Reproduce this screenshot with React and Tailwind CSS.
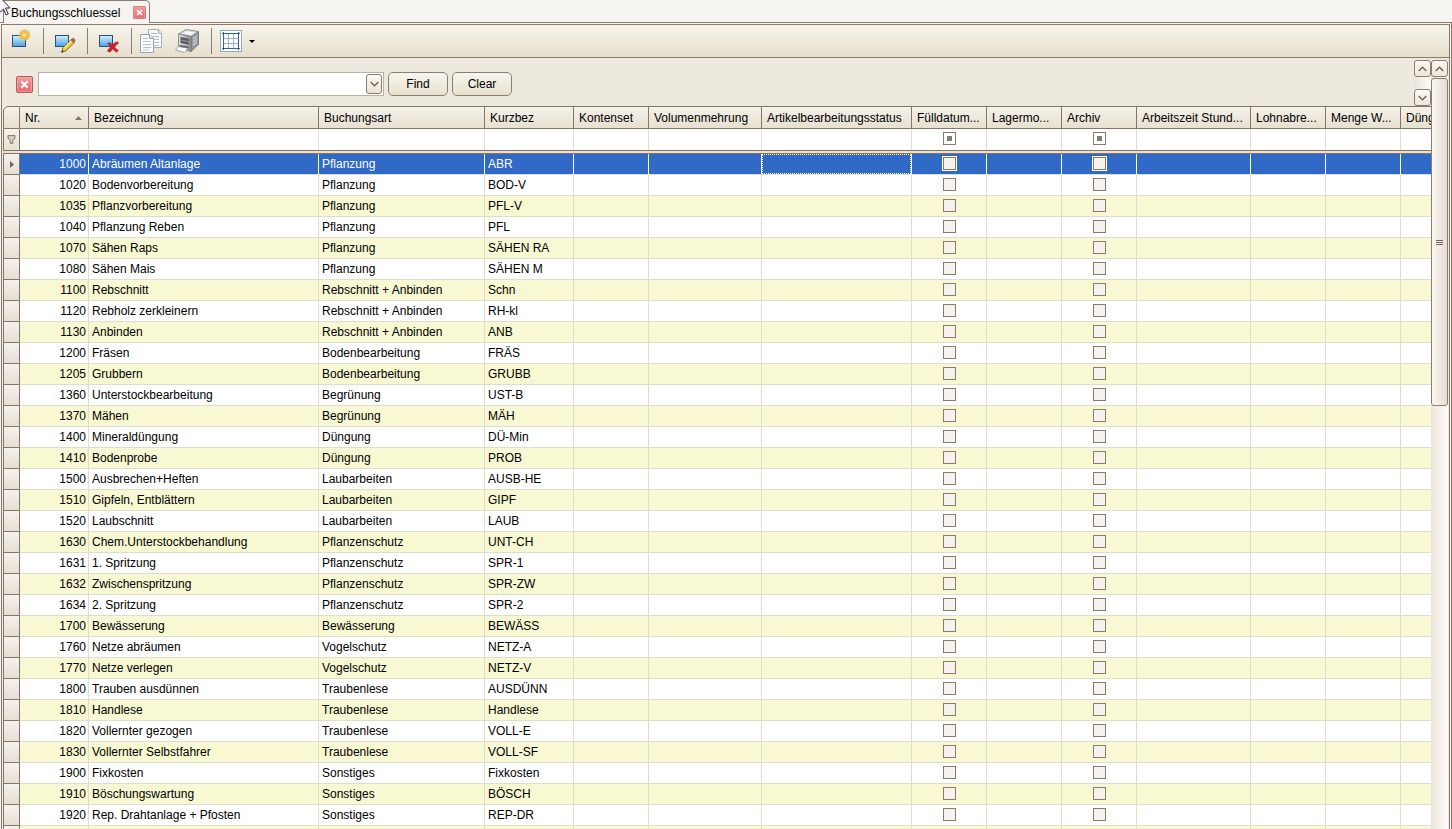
import React, { useState } from "react";

const columns = [
  { key: "nr", label: "Nr.", width: 69, sorted: true },
  { key: "bezeichnung", label: "Bezeichnung", width: 230 },
  { key: "buchungsart", label: "Buchungsart", width: 166 },
  { key: "kurzbez", label: "Kurzbez", width: 89 },
  { key: "kontenset", label: "Kontenset", width: 75 },
  { key: "volumen", label: "Volumenmehrung", width: 113 },
  { key: "artikelstatus", label: "Artikelbearbeitungsstatus", width: 150 },
  { key: "fuelldatum", label: "Fülldatum...", width: 75, check: true },
  { key: "lagermo", label: "Lagermo...", width: 75 },
  { key: "archiv", label: "Archiv", width: 75, check: true },
  { key: "arbeitszeit", label: "Arbeitszeit Stund...", width: 114 },
  { key: "lohnabre", label: "Lohnabre...", width: 75 },
  { key: "menge", label: "Menge W...", width: 75 },
  { key: "dueng", label: "Düng", width: 75 },
];

const data = [
  ["1000", "Abräumen Altanlage", "Pflanzung", "ABR"],
  ["1020", "Bodenvorbereitung", "Pflanzung", "BOD-V"],
  ["1035", "Pflanzvorbereitung", "Pflanzung", "PFL-V"],
  ["1040", "Pflanzung Reben", "Pflanzung", "PFL"],
  ["1070", "Sähen Raps", "Pflanzung", "SÄHEN RA"],
  ["1080", "Sähen Mais", "Pflanzung", "SÄHEN M"],
  ["1100", "Rebschnitt", "Rebschnitt + Anbinden", "Schn"],
  ["1120", "Rebholz zerkleinern", "Rebschnitt + Anbinden", "RH-kl"],
  ["1130", "Anbinden", "Rebschnitt + Anbinden", "ANB"],
  ["1200", "Fräsen", "Bodenbearbeitung", "FRÄS"],
  ["1205", "Grubbern", "Bodenbearbeitung", "GRUBB"],
  ["1360", "Unterstockbearbeitung", "Begrünung", "UST-B"],
  ["1370", "Mähen", "Begrünung", "MÄH"],
  ["1400", "Mineraldüngung", "Düngung", "DÜ-Min"],
  ["1410", "Bodenprobe", "Düngung", "PROB"],
  ["1500", "Ausbrechen+Heften", "Laubarbeiten", "AUSB-HE"],
  ["1510", "Gipfeln, Entblättern", "Laubarbeiten", "GIPF"],
  ["1520", "Laubschnitt", "Laubarbeiten", "LAUB"],
  ["1630", "Chem.Unterstockbehandlung", "Pflanzenschutz", "UNT-CH"],
  ["1631", "1. Spritzung", "Pflanzenschutz", "SPR-1"],
  ["1632", "Zwischenspritzung", "Pflanzenschutz", "SPR-ZW"],
  ["1634", "2. Spritzung", "Pflanzenschutz", "SPR-2"],
  ["1700", "Bewässerung", "Bewässerung", "BEWÄSS"],
  ["1760", "Netze abräumen", "Vogelschutz", "NETZ-A"],
  ["1770", "Netze verlegen", "Vogelschutz", "NETZ-V"],
  ["1800", "Trauben ausdünnen", "Traubenlese", "AUSDÜNN"],
  ["1810", "Handlese", "Traubenlese", "Handlese"],
  ["1820", "Vollernter gezogen", "Traubenlese", "VOLL-E"],
  ["1830", "Vollernter Selbstfahrer", "Traubenlese", "VOLL-SF"],
  ["1900", "Fixkosten", "Sonstiges", "Fixkosten"],
  ["1910", "Böschungswartung", "Sonstiges", "BÖSCH"],
  ["1920", "Rep. Drahtanlage + Pfosten", "Sonstiges", "REP-DR"],
  ["", "", "", ""],
];

function CloseIcon({ className }) {
  return (
    <svg className={className} viewBox="0 0 17 17" aria-hidden="true">
      <defs>
        <linearGradient id="closeFill" x1="0" y1="0" x2="0" y2="1">
          <stop offset="0" stopColor="#f59a9a" />
          <stop offset="1" stopColor="#ec6470" />
        </linearGradient>
      </defs>
      <rect x="0.5" y="0.5" width="16" height="16" rx="1.5" fill="url(#closeFill)" stroke="#a8605c" />
      <rect x="1.5" y="1.5" width="14" height="14" rx="1" fill="none" stroke="#f7b0ae" strokeOpacity="0.6" />
      <path d="M5.3 5.3l6.4 6.4M11.7 5.3l-6.4 6.4" stroke="#fff" strokeWidth="2.2" />
    </svg>
  );
}

function Chevron({ up }) {
  return (
    <svg className="h-[6px] w-[9px]" viewBox="0 0 9 6" aria-hidden="true">
      <path
        d={up ? "M0.7 5L4.5 1.2L8.3 5" : "M0.7 1L4.5 4.8L8.3 1"}
        fill="none"
        stroke="#6f6055"
        strokeWidth="1.3"
      />
    </svg>
  );
}

// blue card shared by the new / edit / delete icons
function Card({ y }) {
  return (
    <>
      <defs>
        <linearGradient id="cardFill" x1="0" y1="0" x2="0" y2="1">
          <stop offset="0" stopColor="#d6f0fc" />
          <stop offset="0.5" stopColor="#8fcaf2" />
          <stop offset="1" stopColor="#4f9be0" />
        </linearGradient>
      </defs>
      <rect x="1.5" y={y} width="13" height="11" fill="url(#cardFill)" stroke="#27517c" />
    </>
  );
}

function NewIcon() {
  return (
    <svg className="h-6 w-6" viewBox="0 0 24 24" aria-hidden="true">
      <Card y={6.5} />
      <circle cx="13.5" cy="6" r="5.8" fill="#d9bd72" fillOpacity="0.8" />
      <path
        d="M13.5 1l1.3 2.8 3-.9-1.2 2.8 2.7 1.4-2.9.9.4 3-2.6-1.6-2.3 2-.3-3-3-.5 2.4-1.9-1.5-2.6 2.9.7z"
        fill="#fbb92c"
      />
      <circle cx="13.5" cy="6.2" r="2" fill="#ffe58a" />
    </svg>
  );
}

function EditIcon() {
  return (
    <svg className="h-6 w-6" viewBox="0 0 24 24" aria-hidden="true">
      <Card y={6.5} />
      <path d="M7.5 23.5l1.6-4.8 8-8 3 3-8 8z" fill="#f3cf3e" stroke="#6d5a20" strokeWidth="0.9" />
      <path d="M9.8 19.3l7.8-7.8" stroke="#fff0a0" strokeWidth="1.2" />
      <path d="M17 10.8l1.5-1.3q1.2-.4 2 .7.9 1 .2 1.8L19.9 13.5z" fill="#d8594a" stroke="#7c3c30" strokeWidth="0.7" />
      <path d="M7.5 23.5l.9-2.6 1.6 1.6z" fill="#4a3a1e" />
    </svg>
  );
}

function DeleteIcon() {
  return (
    <svg className="h-6 w-6" viewBox="0 0 24 24" aria-hidden="true">
      <Card y={6.5} />
      <path
        d="M9.5 14.2q2.400-1.200 5 1.500Q16 13.500 19.500 12.700l1 1.600q-2.700 1.500-3.800 3.600 1.300 2.200 3.800 3.500l-2 1.800Q16.300 22 14.700 20q-1.300 1.900-2.800 3.300l-2.600-1.200q1.600-2.400 3.200-4.300-1.400-2-3-3.600z"
        fill="#d2222a"
        stroke="#a8151c"
        strokeWidth="0.5"
      />
    </svg>
  );
}

function CopyIcon() {
  return (
    <svg className="h-[26px] w-6" viewBox="0 0 24 26" aria-hidden="true">
      <path d="M8.5 1.5h10l3 4v14h-13z" fill="#f6f8fb" stroke="#a2abb8" />
      <path d="M18.5 1.5v4h3" fill="#dfe5ee" stroke="#a2abb8" />
      <path d="M11 5.5h6M11 8.5h8M11 11.5h8M11 14.5h8M11 17.5h8" stroke="#b6bfcd" />
      <path d="M0.5 6.500h9l4 4v14h-13z" fill="#fff" stroke="#98a2b0" />
      <path d="M9.5 6.5v4h4" fill="#e3e9f1" stroke="#98a2b0" />
      <path d="M3 10.500h5M3 13.500h8M3 16.500h8M3 19.500h8M3 22h6" stroke="#b6bfcd" />
    </svg>
  );
}

function PrintIcon() {
  return (
    <svg className="h-[26px] w-[26px]" viewBox="0 0 26 26" aria-hidden="true">
      <defs>
        <linearGradient id="printSide" x1="0" y1="0" x2="1" y2="0">
          <stop offset="0" stopColor="#e2e4e6" />
          <stop offset="1" stopColor="#8d9093" />
        </linearGradient>
      </defs>
      {/* right side */}
      <path d="M17 8.500L24.500 4v12.500L17 23.500z" fill="#97999c" stroke="#6a6c6f" strokeWidth="0.8" />
      <path d="M19 11l3.800-2.800M19 14l3.800-2.800M19 17l3.800-2.800" stroke="#d0d2d4" strokeWidth="1.200" />
      {/* top */}
      <path d="M4.500 6L12 1.500l12.500 2L17 8.500z" fill="#dcdee0" stroke="#77797c" strokeWidth="0.8" />
      <path d="M9 5.500l4-2.300 7.500 1.200-3.700 2.600z" fill="#f5f6f7" />
      {/* front */}
      <path d="M4.500 6L17 8.500v15L4.500 20z" fill="url(#printSide)" stroke="#77797c" strokeWidth="0.8" />
      <path d="M6.500 9l8.500 1.700v5.800L6.500 15z" fill="#585b5f" />
      <path d="M6.500 12l8.500 1.700" stroke="#a6a9ad" strokeWidth="0.8" />
      <path d="M5.500 17l9 1.800v2L5.500 19z" fill="#4d4f53" />
      <path d="M4.500 18.500L14 20.200 10.500 24.500 1.500 22z" fill="#fff" stroke="#8c8f93" strokeWidth="0.8" />
    </svg>
  );
}

function GridIcon() {
  return (
    <svg className="h-[22px] w-[22px]" viewBox="0 0 22 22" aria-hidden="true">
      <rect x="0.5" y="0.5" width="21" height="21" fill="#fff" stroke="#93a7bd" />
      <path d="M8.500 3v16M13.500 3v16M3 8.500h16M3 13.500h16" stroke="#9db4cf" />
      <path d="M2 3.500h18M2 18.500h18M3.500 2v18M18.500 2v18" stroke="#2f62a0" />
    </svg>
  );
}

function ToolButton({ label, className, children }) {
  return (
    <button type="button" aria-label={label} title={label} className={`flex items-center justify-center ${className}`}>
      {children}
    </button>
  );
}

function Separator() {
  return <span className="h-[26px] w-px shrink-0 bg-[#8d7d70]" />;
}

function Toolbar() {
  return (
    <div className="mr-px ml-px flex h-[34px] shrink-0 items-center border border-[#8d7a6c] bg-gradient-to-b from-[#f7f4ec] to-[#e5dfcc]">
      <ToolButton label="Neu" className="mr-[8px] ml-[9px] w-6">
        <NewIcon />
      </ToolButton>
      <Separator />
      <ToolButton label="Bearbeiten" className="mr-[9px] ml-[10px] w-6">
        <EditIcon />
      </ToolButton>
      <Separator />
      <ToolButton label="Löschen" className="mr-[9px] ml-[10px] w-6">
        <DeleteIcon />
      </ToolButton>
      <Separator />
      <ToolButton label="Kopieren" className="ml-[8px] w-6">
        <CopyIcon />
      </ToolButton>
      <ToolButton label="Drucken" className="mr-[11px] ml-[10px] w-[26px]">
        <PrintIcon />
      </ToolButton>
      <Separator />
      <ToolButton label="Raster" className="ml-[8px] w-[22px]">
        <GridIcon />
      </ToolButton>
      <ToolButton label="Raster Optionen" className="ml-[4px] w-[12px]">
        <svg className="h-[3px] w-[6px]" viewBox="0 0 6 3" aria-hidden="true">
          <path d="M0 0h6L3 3z" fill="#000" />
        </svg>
      </ToolButton>
    </div>
  );
}

function ScrollButton({ label, up }) {
  return (
    <button
      type="button"
      aria-label={label}
      className="flex h-[17px] w-[17px] shrink-0 items-center justify-center rounded-[3px] border border-[#8d7d70] bg-gradient-to-b from-[#fbf9f5] to-[#ece6d8]"
    >
      <Chevron up={up} />
    </button>
  );
}

function SearchPanel() {
  const [text, setText] = useState("");

  return (
    <div className="flex h-[46px] shrink-0 items-start">
      <form className="flex flex-1 items-center pt-[12px] pl-[13px]" onSubmit={(e) => e.preventDefault()}>
        <button type="button" aria-label="Suche schließen" className="mr-[5px]">
          <CloseIcon className="h-[17px] w-[17px]" />
        </button>
        <div className="mr-1 flex h-[24px] w-[346px] items-center border border-[#b9b2a6] bg-white pr-px">
          <input
            type="text"
            aria-label="Suche"
            value={text}
            onChange={(e) => setText(e.target.value)}
            className="h-full min-w-0 flex-1 px-1 outline-none"
          />
          <button
            type="button"
            aria-label="Suchverlauf"
            className="flex h-[20px] w-[16px] items-center justify-center rounded-[3px] border border-[#8d7d70] bg-gradient-to-b from-[#fbf9f5] to-[#e9e3d3]"
          >
            <Chevron />
          </button>
        </div>
        <button
          type="submit"
          className="mr-1 h-[24px] w-[60px] rounded-[5px] border border-[#8d7d70] bg-gradient-to-b from-[#f8f6f0] to-[#e6e0cf]"
        >
          Find
        </button>
        <button
          type="button"
          onClick={() => setText("")}
          className="h-[24px] w-[60px] rounded-[5px] border border-[#8d7d70] bg-gradient-to-b from-[#f8f6f0] to-[#e6e0cf]"
        >
          Clear
        </button>
      </form>
      <div className="flex h-full w-[17px] flex-col justify-between bg-gradient-to-r from-[#eae3d8] to-[#fdfcfa]">
        <ScrollButton label="Nach oben" up />
        <ScrollButton label="Nach unten" />
      </div>
    </div>
  );
}

const boxClass = "block mx-auto h-[13px] w-[13px] appearance-none border border-[#8b796b] bg-[#f6f3ef]";

function HeaderRow() {
  return (
    <tr>
      <th className="h-[23px] rounded-tl-[5px] border border-[#85746a] bg-gradient-to-b from-[#f5f2ea] to-[#e6e0cf] p-0" />
      {columns.map((col) => (
        <th
          key={col.key}
          scope="col"
          className="h-[23px] overflow-hidden border-y border-r border-[#85746a] bg-gradient-to-b from-[#f5f2ea] to-[#e6e0cf] p-0 pl-[5px] text-left font-normal whitespace-nowrap"
        >
          {col.sorted ? (
            <div className="flex items-center justify-between pr-[6px]">
              {col.label}
              <svg className="h-[4px] w-[7px]" viewBox="0 0 7 4" aria-hidden="true">
                <path d="M0 4h7L3.5 0z" fill="#85756a" />
              </svg>
            </div>
          ) : (
            col.label
          )}
        </th>
      ))}
    </tr>
  );
}

function FilterRow() {
  return (
    <tr>
      <td className="h-[21px] border-x border-[#85746a] bg-gradient-to-b from-[#f5f2ea] to-[#e6e0cf] p-0">
        <svg className="mx-auto h-[9px] w-[9px]" viewBox="0 0 9 9" aria-hidden="true">
          <path d="M1 .6h7v2.400L5.800 5.500v2.800H3.200V5.500L1 3z" fill="#d9d0c4" stroke="#85756a" />
        </svg>
      </td>
      {columns.map((col) => (
        <td key={col.key} className="h-[21px] border-r border-[#e2dfd0] bg-white p-0 align-top">
          {col.check && (
            <div className="pt-[3px]">
              <input
                type="checkbox"
                aria-label={`Filter ${col.label}`}
                className="mx-auto block h-[13px] w-[13px] appearance-none border border-[#8b796b] bg-[#8b796b] bg-clip-content p-[3px]"
              />
            </div>
          )}
        </td>
      ))}
    </tr>
  );
}

function DataRow({ row, index }) {
  const selected = index === 0;
  const rowClass = selected ? "bg-[#3169c6] text-white" : index % 2 === 0 ? "bg-[#f8f8d2]" : "bg-white";
  const cellClass = `h-[21px] overflow-hidden border-r border-b p-0 whitespace-nowrap ${
    selected ? "border-r-white border-b-[#e2dfd0]" : "border-[#dfddcc]"
  }`;

  return (
    <tr className={rowClass}>
      <td className="h-[21px] border-x border-b border-[#85746a] bg-gradient-to-b from-[#f5f1ec] to-[#e5dfd4] p-0">
        {selected && (
          <svg className="mx-auto h-[7px] w-[4px]" viewBox="0 0 4 7" aria-hidden="true">
            <path d="M0 0v7l4-3.5z" fill="#75665b" />
          </svg>
        )}
      </td>
      {columns.map((col, i) => {
        if (col.check) {
          return (
            <td key={col.key} className={`${cellClass} align-top`}>
              <div className="pt-[3px]">
                <input
                  type="checkbox"
                  aria-label={`${col.label} ${row[0]}`}
                  className={`${boxClass} ${selected ? "outline outline-white" : ""}`}
                />
              </div>
            </td>
          );
        }
        if (selected && col.key === "artikelstatus") {
          return (
            <td key={col.key} className={cellClass}>
              <div className="h-[20px] border border-dotted border-white" />
            </td>
          );
        }
        return (
          <td key={col.key} className={`${cellClass} ${i === 0 ? "pr-[2px] text-right" : "pl-[3px]"}`}>
            {row[i]}
          </td>
        );
      })}
    </tr>
  );
}

function DataGrid() {
  return (
    <div className="min-h-0 flex-1 overflow-hidden bg-white">
      <table className="w-[1473px] table-fixed border-separate border-spacing-0">
        <colgroup>
          <col style={{ width: 17 }} />
          {columns.map((col) => (
            <col key={col.key} style={{ width: col.width }} />
          ))}
        </colgroup>
        <thead>
          <HeaderRow />
          <FilterRow />
          <tr>
            <td colSpan={15} className="h-[4px] border-y border-[#85746a] bg-[#eae2cf] p-0" />
          </tr>
        </thead>
        <tbody>
          {data.map((row, index) => (
            <DataRow key={index} row={row} index={index} />
          ))}
        </tbody>
      </table>
    </div>
  );
}

function Scrollbar() {
  return (
    <div className="flex w-[17px] shrink-0 flex-col bg-gradient-to-r from-[#ebe4da] to-[#fdfcfa]">
      <ScrollButton label="Liste nach oben" up />
      <div className="mt-px flex h-[328px] flex-col items-center justify-center gap-px rounded-[3px] border border-[#8d7d70] bg-gradient-to-r from-[#faf7f2] to-[#e5ddd0]">
        <span className="h-px w-[7px] bg-[#75665b]" />
        <span className="h-px w-[7px] bg-[#75665b]" />
        <span className="h-px w-[7px] bg-[#75665b]" />
      </div>
    </div>
  );
}

function App() {
  return (
    <div className="relative flex h-screen flex-col overflow-hidden bg-[#ede9de] font-['Liberation_Sans',Arial,sans-serif] text-[12px] leading-[20px] text-black">
      <div className="flex h-[23px] shrink-0 items-stretch bg-[#f6f4f0]">
        <div className="w-[3px] border-b border-[#8d7a6c]" />
        <div className="flex w-[147px] items-center justify-between rounded-tr-[5px] border-t border-r border-l border-[#8d7a6c] bg-[#f6f4f0] pr-[3px] pl-[7px]">
          <span className="pt-px">Buchungsschluessel</span>
          <button type="button" aria-label="Tab schließen">
            <CloseIcon className="h-[13px] w-[13px]" />
          </button>
        </div>
        <div className="flex-1 border-b border-[#8d7a6c]" />
      </div>
      <div className="flex min-h-0 flex-1 flex-col border-r border-[#8d7a6c] bg-[#f6f4f0] pt-px">
        <Toolbar />
        <div className="mr-px ml-px flex min-h-0 flex-1 border-x border-[#8d7a6c] bg-[#ede9de] px-px pt-[2px]">
          <div className="flex min-w-0 flex-1 flex-col">
            <SearchPanel />
            <DataGrid />
          </div>
          <Scrollbar />
        </div>
      </div>
      <svg className="absolute top-0 left-0 h-[16px] w-[12px]" viewBox="0 0 12 16" aria-hidden="true">
        <path d="M-1 -4L10 8H5.5l2.800 6-2.200 1L3.500 9.200-1 13z" fill="#f3f4fa" stroke="#2c2c48" />
      </svg>
    </div>
  );
}

export default App;
